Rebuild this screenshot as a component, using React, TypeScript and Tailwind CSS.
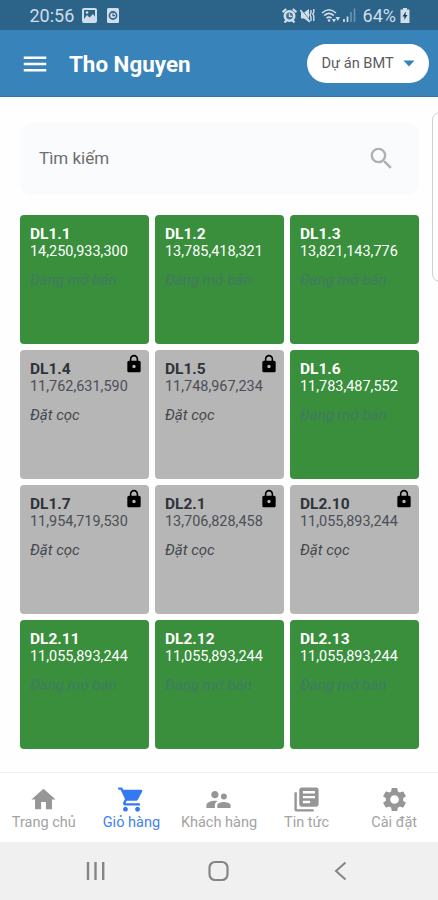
import type { IconType } from "react-icons";
import {
	MdHome,
	MdLibraryBooks,
	MdLock,
	MdMenu,
	MdSearch,
	MdSettings,
	MdShoppingCart,
	MdSupervisorAccount,
} from "react-icons/md";

type Lot = {
	code: string;
	price: string;
	reserved?: boolean;
};

const lots: Lot[] = [
	{ code: "DL1.1", price: "14,250,933,300" },
	{ code: "DL1.2", price: "13,785,418,321" },
	{ code: "DL1.3", price: "13,821,143,776" },
	{ code: "DL1.4", price: "11,762,631,590", reserved: true },
	{ code: "DL1.5", price: "11,748,967,234", reserved: true },
	{ code: "DL1.6", price: "11,783,487,552" },
	{ code: "DL1.7", price: "11,954,719,530", reserved: true },
	{ code: "DL2.1", price: "13,706,828,458", reserved: true },
	{ code: "DL2.10", price: "11,055,893,244", reserved: true },
	{ code: "DL2.11", price: "11,055,893,244" },
	{ code: "DL2.12", price: "11,055,893,244" },
	{ code: "DL2.13", price: "11,055,893,244" },
];

const tabs: { label: string; icon: IconType; active?: boolean }[] = [
	{ label: "Trang chủ", icon: MdHome },
	{ label: "Giỏ hàng", icon: MdShoppingCart, active: true },
	{ label: "Khách hàng", icon: MdSupervisorAccount },
	{ label: "Tin tức", icon: MdLibraryBooks },
	{ label: "Cài đặt", icon: MdSettings },
];

export default function App() {
	return (
		<div className="relative flex h-[900px] w-[438px] flex-col overflow-hidden bg-[#fefefe] font-['Roboto',sans-serif]">
			<StatusBar />
			<header className="flex h-[67px] shrink-0 items-center border-b border-[#2f75a6] bg-[#3883ba] pr-[9px] pl-5">
				<MdMenu className="mt-[2px] h-[30px] w-[30px] text-white" />
				<h1 className="mt-[3px] ml-[19px] text-[22.4px] leading-none font-bold text-white">
					Tho Nguyen
				</h1>
				<button
					type="button"
					className="ml-auto flex h-[39px] w-[122.5px] items-center rounded-full bg-white pl-[15px] text-[14.6px] text-[#5c5c5c]"
				>
					<span className="pt-[2px]">Dự án BMT</span>
					<svg className="mt-px ml-[9px] h-[7px] w-[12px]" viewBox="0 0 12 7">
						<path d="M0.5 0.5h11L6 6.5z" fill="#2f86bd" />
					</svg>
				</button>
			</header>

			<main className="flex-1 px-5 pt-[25.5px]">
				<div className="flex h-[72px] w-[399px] items-center justify-between rounded-xl bg-[#f9fbfd] pr-[23px] pl-[19px]">
					<span className="text-[17px] text-[#6e6e6e]">Tìm kiếm</span>
					<MdSearch className="h-[29px] w-[29px] text-[#b0b0b0]" />
				</div>
				<div className="mt-5 grid w-[399px] grid-cols-3 gap-1.5">
					{lots.map((lot) => (
						<LotCard key={lot.code} lot={lot} />
					))}
				</div>
			</main>

			<nav className="flex h-[70px] shrink-0 border-t border-[#f0f0f0] bg-white">
				{tabs.map(({ label, icon: Icon, active }) => (
					<div
						key={label}
						className={`flex w-1/5 flex-col items-center pt-[12px] ${active ? "text-[#3579f2]" : "text-[#969696]"}`}
					>
						<Icon className="h-[29px] w-[29px]" />
						<span
							className={`text-[14.5px] leading-[18px] whitespace-nowrap ${active ? "text-[#3f82ee]" : "text-[#a3a3a3]"}`}
						>
							{label}
						</span>
					</div>
				))}
			</nav>
			<SystemNav />

			{/* edge panel handle */}
			<div className="absolute top-[112px] -right-[10px] h-[170px] w-4 rounded-[8px] border border-[#cfcfcf] bg-white" />
		</div>
	);
}

function LotCard({ lot }: { lot: Lot }) {
	return (
		<div
			className={`relative h-[129px] rounded-[4px] pt-[10px] pl-[10px] ${lot.reserved ? "bg-[#b6b6b6] text-[#4b4f57]" : "bg-[#398f3c] text-white"}`}
		>
			<div
				className={`text-[15.5px] leading-[18px] font-bold ${lot.reserved ? "text-[#2f333a]" : "text-white"}`}
			>
				{lot.code}
			</div>
			<div className="text-[14.45px] leading-[17px]">{lot.price}</div>
			<div
				className={`mt-[12.5px] text-[15px] leading-[17px] italic ${lot.reserved ? "text-[#43474d]" : "text-[#407a62]"}`}
			>
				{lot.reserved ? "Đặt cọc" : "Đang mở bán"}
			</div>
			{lot.reserved ? (
				<MdLock className="absolute top-[4px] right-[5px] h-5 w-5 text-black" />
			) : null}
		</div>
	);
}

function StatusBar() {
	return (
		<div className="flex h-[30px] shrink-0 items-center bg-[#2b6389] pr-[28px] pl-[29.5px] text-[#cfdeea]">
			<span className="pt-px text-[18px] leading-none">20:56</span>
			<svg className="ml-[8px] h-[15px] w-[15px]" viewBox="0 0 15 15">
				<rect x="1" y="1" width="13" height="13" rx="1" fill="none" stroke="currentColor" strokeWidth="2" />
				<path d="M2 11l3-4 2.5 2.500L11 6l3 4v3H2z" fill="currentColor" />
				<circle cx="5" cy="4.500" r="1.300" fill="currentColor" />
			</svg>
			<svg className="ml-[10px] h-[15px] w-[12px]" viewBox="0 0 12 15">
				<rect width="12" height="15" rx="1.500" fill="currentColor" />
				<circle cx="6" cy="7.500" r="3.600" fill="none" stroke="#2b6389" strokeWidth="1.600" />
				<path d="M6 5.400v2.300h2" fill="none" stroke="#2b6389" strokeWidth="1.200" />
			</svg>
			<div className="ml-auto flex items-center">
				{/* alarm */}
				<svg className="h-[15px] w-[15px]" viewBox="0 0 15 15">
					<circle cx="7.500" cy="8" r="6" fill="currentColor" />
					<path d="M0.600 4.200L4.200 1M14.400 4.200L10.800 1M2.500 14.500l2-2M12.500 14.500l-2-2" stroke="currentColor" strokeWidth="2.200" />
					<circle cx="7.500" cy="8" r="3.400" fill="#3f7397" />
					<path d="M7.500 5.500v2.800h2.500" fill="none" stroke="currentColor" strokeWidth="1.300" />
				</svg>
				{/* muted, vibrating */}
				<svg className="ml-[3px] h-[15px] w-[15px]" viewBox="0 0 15 15">
					<path d="M1 4.500h3l5-3.500v13L4 10.500H1z" fill="currentColor" />
					<path d="M1.500 1.500l8.500 11" stroke="#2b6389" strokeWidth="0.800" />
					<path d="M0.300 2l9.500 12" stroke="currentColor" strokeWidth="1.700" />
					<path d="M11 2v3l-1 2 1 2v4M13.800 1v3l-1 2 1 2v5" fill="none" stroke="currentColor" strokeWidth="1.400" />
				</svg>
				{/* wifi */}
				<svg className="ml-[6px] h-[15px] w-[20px]" viewBox="0 0 20 15">
					<path d="M1 5q7-6.500 14 0M3.200 7.600q4.800-4.400 9.600 0M5.500 10.200q2.500-2.200 5 0" fill="none" stroke="currentColor" strokeWidth="1.600" />
					<circle cx="8" cy="12.500" r="1.300" fill="currentColor" />
					<path d="M11 11h4l-2 3.500zM14.500 9h4.500l-2.200 4z" fill="currentColor" />
				</svg>
				{/* signal */}
				<svg className="ml-[2px] h-[14px] w-[13px]" viewBox="0 0 13 14">
					<path d="M1 11v3M4.500 8.500V14" stroke="currentColor" strokeWidth="1.700" />
					<path d="M8 4v10M11.500 0.500V14" stroke="#6f94ae" strokeWidth="1.600" />
				</svg>
				<span className="ml-[7px] pt-px text-[18px] leading-none">64%</span>
				<svg className="ml-[4px] h-[15px] w-[10px]" viewBox="0 0 10 15">
					<path d="M3 0h4v1.500h2.500V15h-9V1.500H3z" fill="currentColor" />
					<path d="M5.800 3.500L2.500 8.500h2L4.200 12l3.300-5h-2z" fill="#173c58" />
				</svg>
			</div>
		</div>
	);
}

function SystemNav() {
	return (
		<div className="flex h-[58px] shrink-0 items-center justify-between bg-[#f0f0f0] pr-[91px] pl-[85px] text-[#858585]">
			<svg className="h-5 w-5" viewBox="0 0 20 20" fill="none" stroke="currentColor" strokeWidth="2.400">
				<path d="M3 1v18M10.500 1v18M18.200 1v18" />
			</svg>
			<svg className="mr-[1px] h-[22px] w-[22px]" viewBox="0 0 22 22" fill="none" stroke="currentColor" strokeWidth="2.200">
				<rect x="1.500" y="2" width="18" height="18" rx="5.500" />
			</svg>
			<svg className="h-5 w-[14px]" viewBox="0 0 14 20" fill="none" stroke="currentColor" strokeWidth="2">
				<path d="M12.500 1.500L3 10l9.500 8.500" />
			</svg>
		</div>
	);
}
